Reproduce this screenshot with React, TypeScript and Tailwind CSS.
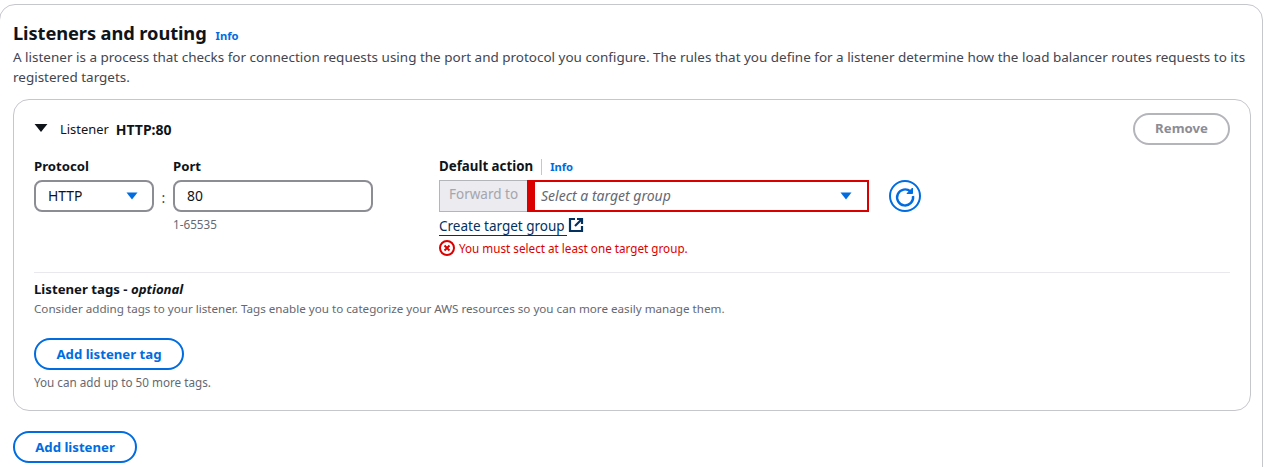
import React from "react";

const Caret = ({ className }: { className: string }) => (
  <svg viewBox="0 0 12 8" className={className}>
    <path d="M0.5 0.5H11.5L6 7.5Z" fill="currentColor" />
  </svg>
);

export default function App() {
  return (
    <div className="w-[1266px] h-[467px] overflow-hidden bg-white font-['Noto_Sans',sans-serif] text-[#0f141a] relative">
      <div className="mt-[4px] ml-[-1px] w-[1264px] h-[480px] border border-[#c6c6cd] rounded-t-[16px] pl-[13px] pr-[15px] pt-[15px]">
        <div className="flex items-baseline gap-[9px] h-[26px]">
          <h2 className="text-[18.3px] leading-[26px] font-bold tracking-[-0.1px]">Listeners and routing</h2>
          <span className="text-[11.2px] font-bold text-[#006ce0]">Info</span>
        </div>
        <p className="text-[13.47px] leading-[20px] mt-[1px] text-[#424650] w-[1240px]">
          A listener is a process that checks for connection requests using the port and protocol you configure. The rules that you define for a listener determine how the load balancer routes requests to its registered targets.
        </p>
        <div className="mt-[12px] w-[1238px] h-[312px] border border-[#c6c6cd] rounded-[16px] pl-[20px] pr-[20px] pt-[13px]">
          <div className="flex items-center justify-between h-[32px]">
            <div className="flex items-center">
              <Caret className="w-[14px] h-[10px] text-[#0f141a] mb-[2px]" />
              <span className="ml-[12px] text-[12.9px] pt-[1px]">Listener</span>
              <span className="ml-[7px] text-[14px] font-bold">HTTP:80</span>
            </div>
            <button className="w-[97px] h-[32px] border-2 border-[#b4b4bb] rounded-full text-[13.2px] font-bold text-[#8c8c94]">Remove</button>
          </div>
          <div className="flex mt-[11px] h-[116px]">
            <div className="w-[120px]">
              <div className="text-[13.2px] leading-[20px] font-bold">Protocol</div>
              <div className="mt-[4px] h-[32px] border-2 border-[#8c8c94] rounded-[8px] flex items-center justify-between pl-[12px] pr-[14px] text-[13.9px]">
                <span>HTTP</span>
                <Caret className="w-[12px] h-[8px] text-[#006ce0]" />
              </div>
            </div>
            <div className="w-[19px] pt-[25px] flex items-center justify-center h-[57px] text-[14px] text-[#424650]">:</div>
            <div className="w-[200px]">
              <div className="text-[13.2px] leading-[20px] font-bold">Port</div>
              <div className="mt-[4px] h-[32px] border-2 border-[#8c8c94] rounded-[8px] flex items-center pl-[12px] text-[13.9px]">80</div>
              <div className="mt-[3px] text-[11.7px] leading-[18px] text-[#656871]">1-65535</div>
            </div>
            <div className="ml-[66px]">
              <div className="flex items-center h-[21px] pt-[1px]">
                <span className="text-[13.3px] font-bold">Default action</span>
                <span className="ml-[8px] h-[16px] border-l border-[#c6c6cd]" />
                <span className="ml-[8px] text-[11.2px] font-bold text-[#006ce0]">Info</span>
              </div>
              <div className="flex items-center mt-[3px]">
                <div className="w-[88px] h-[32px] bg-[#ebebf0] border border-[#b4b4bb] border-r-0 flex items-center justify-center text-[13.5px] text-[#a5a5ad] pb-[3px] whitespace-nowrap">Forward to</div>
                <div className="w-[342px] h-[32px] border-2 border-l-[8px] border-[#db0000] flex items-center justify-between pl-[6px] pr-[15px] text-[14px] italic text-[#656871]">
                  <span className="pb-[1px]">Select a target group</span>
                  <Caret className="w-[12px] h-[8px] text-[#006ce0]" />
                </div>
                <svg viewBox="0 0 32 32" className="ml-[20px] w-[32px] h-[32px] text-[#006ce0]" fill="none" stroke="currentColor">
                  <circle cx="16" cy="16" r="15" strokeWidth="2" />
                  <path d="M21.5 11.5A8 8 0 1 0 24 16" strokeWidth="2.4" />
                  <path d="M23.5 8V13.5H18Z" fill="currentColor" strokeWidth="1" />
                </svg>
              </div>
              <div className="mt-[4px] flex items-center h-[20px] w-[128px] border-b border-[#033160] text-[#033160] whitespace-nowrap">
                <span className="text-[13.5px] leading-[20px] pt-[1px]">Create target group</span>
                <svg viewBox="0 0 16 16" className="ml-[3px] w-[16px] h-[16px] shrink-0 mb-[2px]" fill="none" stroke="currentColor" strokeWidth="2.2">
                  <path d="M7 2H2V14H14V9" />
                  <path d="M9 2H14V7" />
                  <path d="M14 2L7 9" />
                </svg>
              </div>
              <div className="mt-[3px] flex items-center text-[#db0000] text-[11.7px] leading-[18px]">
                <svg viewBox="0 0 16 16" className="w-[16px] h-[16px] mr-[4px]" fill="none" stroke="currentColor" strokeWidth="2">
                  <circle cx="8" cy="8" r="7" />
                  <path d="M5.5 5.5L10.5 10.5M10.5 5.5L5.5 10.5" />
                </svg>
                <span>You must select at least one target group.</span>
              </div>
            </div>
          </div>
          <div className="border-t border-[#e8e8ed]" />
          <div className="mt-[6px] text-[13.2px] leading-[20px] font-bold">Listener tags - <i>optional</i></div>
          <div className="text-[11.65px] leading-[20px] text-[#656871]">Consider adding tags to your listener. Tags enable you to categorize your AWS resources so you can more easily manage them.</div>
          <button className="block mt-[19px] w-[150px] h-[32px] pt-[2px] border-2 border-[#006ce0] rounded-full text-[13.2px] font-bold text-[#006ce0]">Add listener tag</button>
          <div className="mt-[3px] text-[11.7px] leading-[18px] text-[#656871]">You can add up to 50 more tags.</div>
        </div>
        <button className="block mt-[20px] w-[124px] h-[32px] pt-[2px] border-2 border-[#006ce0] rounded-full text-[13.2px] font-bold text-[#006ce0]">Add listener</button>
      </div>
    </div>
  );
}
